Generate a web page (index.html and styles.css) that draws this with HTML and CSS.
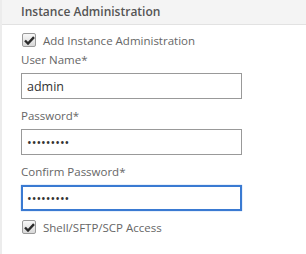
FILE: index.html
```html
<!DOCTYPE html>
<html lang="en">
<head>
    <meta charset="UTF-8">
    <title>Instance Administration</title>
    <link rel="stylesheet" href="styles.css">
</head>
<body>
    <div class="panel">
        <div class="panel-header">Instance Administration</div>
        <div class="panel-body">
            <label class="check">
                <span class="box"><svg width="11" height="9" viewBox="0 0 11 9"><path d="M1 4.5 L4 7.5 L10 1.2" fill="none" stroke="#2b2b2b" stroke-width="2.4"/></svg></span>
                Add Instance Administration
            </label>
            <div class="field">
                <div class="label">User Name*</div>
                <input class="input" type="text" value="admin">
            </div>
            <div class="field">
                <div class="label">Password*</div>
                <input class="input" type="password" value="password1">
            </div>
            <div class="field">
                <div class="label">Confirm Password*</div>
                <input class="input focused" type="password" value="password1">
            </div>
            <label class="check last">
                <span class="box"><svg width="11" height="9" viewBox="0 0 11 9"><path d="M1 4.5 L4 7.5 L10 1.2" fill="none" stroke="#2b2b2b" stroke-width="2.4"/></svg></span>
                Shell/SFTP/SCP Access
            </label>
        </div>
    </div>
</body>
</html>
```
FILE: styles.css
```css
body {
    margin: 0;
    font-family: 'Open Sans', 'Noto Sans', sans-serif;
    background-color: #ffffff;
    color: #666;
}
.panel {
    border-left: 2px solid #ececec;
    height: 254px;
}
.panel-header {
    background-color: #f4f4f4;
    border-bottom: 1px solid #e2e2e2;
    height: 24px;
    line-height: 24px;
    padding-left: 19px;
    font-size: 12px;
    font-weight: 600;
    color: #555;
}
.panel-body {
    padding: 6px 0 0 19px;
}
.check {
    display: flex;
    align-items: center;
    gap: 7px;
    font-size: 11.5px;
    color: #666;
    height: 18px;
}
.check.last {
    margin-top: 7px;
}
.box {
    box-sizing: border-box;
    width: 14px;
    height: 14px;
    border: 1px solid #9a9a9a;
    border-radius: 2px;
    background: linear-gradient(#f8f8f8, #d8d8d8);
    display: flex;
    align-items: center;
    justify-content: center;
    margin-left: 1px;
}
.field {
    margin-top: 3px;
}
.field + .field {
    margin-top: 9px;
}
.label {
    font-size: 11.5px;
    line-height: 16px;
    color: #666;
    margin-bottom: 5px;
}
.input {
    display: block;
    box-sizing: border-box;
    width: 221px;
    height: 26px;
    border: 1px solid #999;
    padding: 0 5px;
    font-family: 'Open Sans', sans-serif;
    font-size: 12.5px;
    color: #333;
    outline: none;
    margin: 0;
}
.focused {
    border: 2px solid #3a7ad2;
    padding: 0 4px;
    box-shadow: 0 0 1px #7aa7e6;
}
```
